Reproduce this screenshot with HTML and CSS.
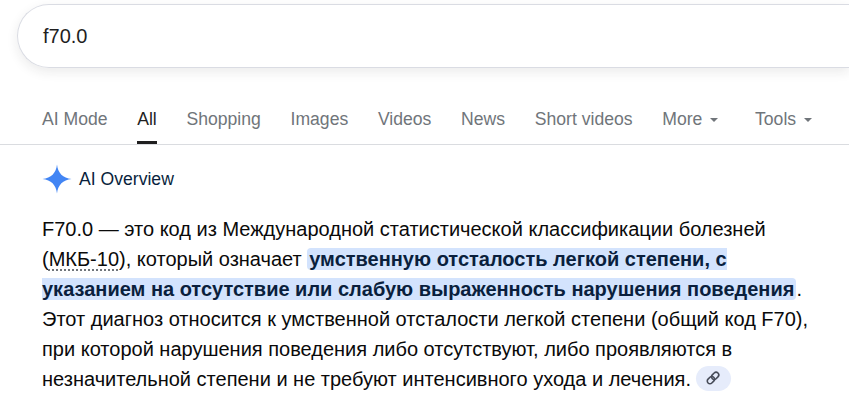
FILE: index.html
```html
<!DOCTYPE html>
<html lang="en">
  <head>
    <title>f70.0 - Search</title>
    <link rel="stylesheet" href="styles.css">
  </head>
  <body>
    <!-- Search box -->
    <div class="search-box">f70.0</div>

    <!-- Tabs -->
    <div class="tabs">
      <a class="tab">AI Mode</a>
      <a class="tab active">All</a>
      <a class="tab">Shopping</a>
      <a class="tab">Images</a>
      <a class="tab">Videos</a>
      <a class="tab">News</a>
      <a class="tab">Short videos</a>
      <a class="tab">More<span class="caret"></span></a>
      <a class="tab tools">Tools<span class="caret"></span></a>
    </div>

    <!-- AI Overview -->
    <div class="overview">
      <div class="overview-head">
        <svg class="spark" width="30" height="30" viewBox="0 0 30 30">
          <path d="M15 0.5C15.8 9 21 14.200 29.500 15C21 15.800 15.800 21 15 29.500C14.200 21 9 15.800 0.500 15C9 14.200 14.200 9 15 0.500Z" fill="#4285f4"/>
        </svg>
        <span class="overview-title">AI Overview</span>
      </div>
      <p class="answer">
        F70.0 — это код из Международной статистической классификации болезней<br>
        (<span class="term">МКБ-10</span>), который означает <mark class="hl">умственную отсталость легкой степени, с<br>указанием на отсутствие или слабую выраженность нарушения поведения</mark>.<br>
        Этот диагноз относится к умственной отсталости легкой степени (общий код F70),<br>
        при которой нарушения поведения либо отсутствуют, либо проявляются в<br>
        незначительной степени и не требуют интенсивного ухода и лечения.
        <span class="link-chip">
          <svg width="16" height="16" viewBox="0 0 24 24" fill="none" stroke="#474c59" stroke-width="2.400">
            <g transform="rotate(-45 12 12)">
              <rect x="1.500" y="8" width="12" height="8" rx="4"/>
              <rect x="10.500" y="8" width="12" height="8" rx="4"/>
            </g>
          </svg>
        </span>
      </p>
    </div>
  </body>
</html>
```

FILE: styles.css
```css
html, body { height: 100%; }
body {
  margin: 0;
  overflow: hidden;
  background: #fff;
  font-family: "Liberation Sans", Arial, sans-serif;
  color: #1f1f1f;
}

/* Search box runs off the right edge */
.search-box {
  box-sizing: border-box;
  width: 832px;
  height: 64px;
  margin: 4px 0 0 17px;
  padding-left: 25px;
  border: 1px solid #dadce3;
  border-right: 0;
  border-radius: 32px 0 0 32px;
  box-shadow: 0 4px 12px rgba(32, 33, 36, 0.09);
  font-size: 20px;
  line-height: 62px;
}

.tabs {
  display: flex;
  height: 76px;
  padding-left: 42px;
  border-bottom: 1px solid #dadce0;
}
.tab {
  display: flex;
  align-items: center;
  margin-right: 29.700px;
  padding-top: 29px;
  border-bottom: 3px solid transparent;
  box-sizing: border-box;
  font-size: 17.600px;
  color: #70757a;
}
.tab.active {
  color: #1f1f1f;
  border-bottom-color: #1f1f1f;
}
.tab.tools { margin-left: 7px; }
.caret {
  margin: 2px 0 0 8px;
  border-top: 4px solid #70757a;
  border-left: 4px solid transparent;
  border-right: 4px solid transparent;
}

.overview { padding-left: 42px; }
.overview-head {
  display: flex;
  align-items: center;
  height: 34px;
  margin-top: 17px;
}
.spark { flex: none; margin-right: 7px; }
.overview-title {
  font-size: 17.600px;
  color: #0a1f3d;
}

.answer {
  margin: 18px 0 0;
  font-size: 20px;
  line-height: 30px;
  color: #0a0a0a;
}
.term {
  text-decoration: underline dotted #70757a 2px;
  text-underline-offset: 3px;
  text-decoration-skip-ink: none;
}
.hl {
  padding: 0 2px;
  border-radius: 4px;
  background: #d3e3fd;
  color: #0a1f3d;
  font-weight: bold;
  -webkit-box-decoration-break: slice;
  box-decoration-break: slice;
}
.link-chip {
  display: inline-flex;
  align-items: center;
  justify-content: center;
  width: 35px;
  height: 25px;
  margin-left: -1px;
  border-radius: 13px;
  background: #e6ecfb;
  vertical-align: 0;
}
```
